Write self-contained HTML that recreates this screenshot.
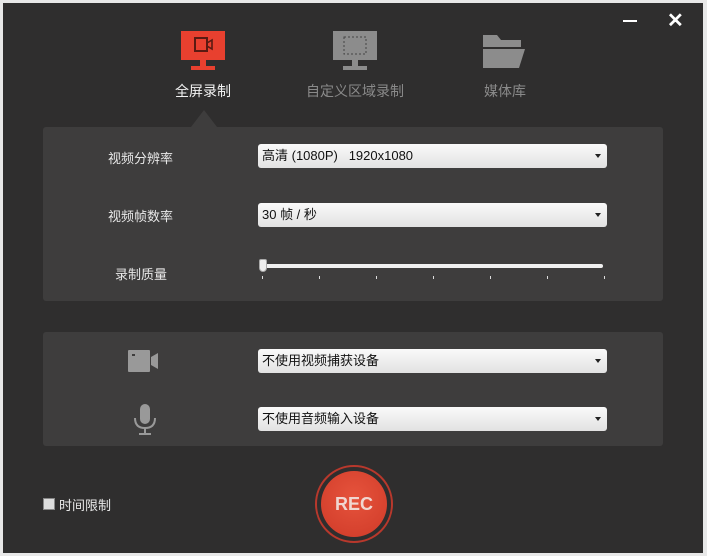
<!DOCTYPE html>
<html><head><meta charset="utf-8"><style>
*{margin:0;padding:0;box-sizing:border-box}
body{width:707px;height:556px;background:#e8e8e8;font-family:"Liberation Sans","Noto Sans CJK SC",sans-serif;position:relative;overflow:hidden}
.win{position:absolute;left:3px;top:3px;width:700px;height:550px;background:#2f2e2e}
.abs{position:absolute}
.panel{position:absolute;left:40px;width:620px;background:#3e3d3d;border-radius:3px}
.lbl{position:absolute;color:#e8e8e8;font-size:13px}
.dd{position:absolute;left:255px;width:349px;height:24px;border-radius:3px;background:linear-gradient(#fafafa,#e2e2e2);color:#111;font-size:13px;line-height:24px;padding-left:4px}
.dd:after{content:"";position:absolute;right:6px;top:10px;border-left:3.5px solid transparent;border-right:3.5px solid transparent;border-top:4px solid #222}
.tab{position:absolute;font-size:14px;color:#8a8a8a;text-align:center}
</style></head><body><div class="win">
<div class="abs" style="left:620px;top:17px;width:14px;height:2px;background:#fff"></div>
<div class="abs" style="left:664px;top:5px;color:#fff;font-size:20px;font-weight:bold">✕</div>

<svg class="abs" style="left:176px;top:28px" width="48" height="42"><rect x="2" y="0" width="44" height="29" fill="#e8402f"/><rect x="21" y="29" width="6" height="6" fill="#e8402f"/><rect x="12" y="35" width="24" height="4" fill="#e8402f"/><rect x="16" y="7" width="12" height="13" fill="none" stroke="#5a1a12" stroke-width="2"/><path d="M28 12 L33 9 V18 L28 15Z" fill="none" stroke="#5a1a12" stroke-width="1.6"/></svg>
<div class="tab" style="left:160px;top:78px;width:80px;color:#f2f2f2">全屏录制</div>

<svg class="abs" style="left:328px;top:28px" width="48" height="42"><rect x="2" y="0" width="44" height="29" fill="#8c8c8c"/><rect x="21" y="29" width="6" height="6" fill="#8c8c8c"/><rect x="12" y="35" width="24" height="4" fill="#8c8c8c"/><rect x="13" y="6" width="22" height="17" fill="none" stroke="#444" stroke-width="1" stroke-dasharray="2 2"/></svg>
<div class="tab" style="left:290px;top:78px;width:124px">自定义区域录制</div>

<svg class="abs" style="left:478px;top:30px" width="46" height="36"><path d="M2 2 H16 L20 7 H40 V14 H2Z" fill="#8c8c8c"/><path d="M2 16 H44 L38 35 H2Z" fill="#8c8c8c"/></svg>
<div class="tab" style="left:472px;top:78px;width:60px">媒体库</div>

<div class="abs" style="left:188px;top:107px;border-left:13px solid transparent;border-right:13px solid transparent;border-bottom:17px solid #3e3d3d"></div>

<div class="panel" style="top:124px;height:174px">
<div class="lbl" style="left:65px;top:21px">视频分辨率</div>
<div class="lbl" style="left:65px;top:79px">视频帧数率</div>
<div class="lbl" style="left:72px;top:137px">录制质量</div>
</div>
<div class="dd" style="top:141px">高清 (1080P)&nbsp;&nbsp; 1920x1080</div>
<div class="dd" style="top:200px">30 帧 / 秒</div>
<div class="abs" style="left:259px;top:261px;width:341px;height:4px;background:#f0f0f0;border-radius:2px"></div>
<div class="abs" style="left:256px;top:256px;width:8px;height:13px;background:#eee;border-radius:2px 2px 4px 4px;border:1px solid #aaa"></div>
<div class="abs" style="left:259px;top:273px;width:345px;height:3px;background:repeating-linear-gradient(90deg,#ddd 0 1px,transparent 1px 57px)"></div>

<div class="panel" style="top:329px;height:114px"></div>
<svg class="abs" style="left:125px;top:346px" width="32" height="24"><rect x="0" y="1" width="22" height="22" rx="1" fill="#999"/><rect x="4" y="5" width="3" height="2" fill="#3e3d3d"/><path d="M23 8 L30 4 V20 L23 16Z" fill="#999"/></svg>
<svg class="abs" style="left:129px;top:400px" width="26" height="34"><rect x="8" y="1" width="10" height="20" rx="5" fill="#999"/><path d="M3 15 Q3 25 13 25 Q23 25 23 15" fill="none" stroke="#999" stroke-width="2"/><rect x="12" y="25" width="2" height="5" fill="#999"/><rect x="7" y="30" width="12" height="2" fill="#999"/></svg>
<div class="dd" style="top:346px">不使用视频捕获设备</div>
<div class="dd" style="top:404px">不使用音频输入设备</div>

<div class="abs" style="left:40px;top:495px;width:12px;height:12px;background:#ddd;border:1px solid #888"></div>
<div class="lbl" style="left:56px;top:492px">时间限制</div>

<div class="abs" style="left:312px;top:462px;width:78px;height:78px;border-radius:50%;border:2px solid #b8382c"></div>
<div class="abs" style="left:318px;top:468px;width:66px;height:66px;border-radius:50%;background:radial-gradient(circle at 50% 40%,#e6533c,#cf3a28);color:#f0d6d0;font-weight:bold;font-size:18px;line-height:66px;text-align:center">REC</div>
</div></body></html>
